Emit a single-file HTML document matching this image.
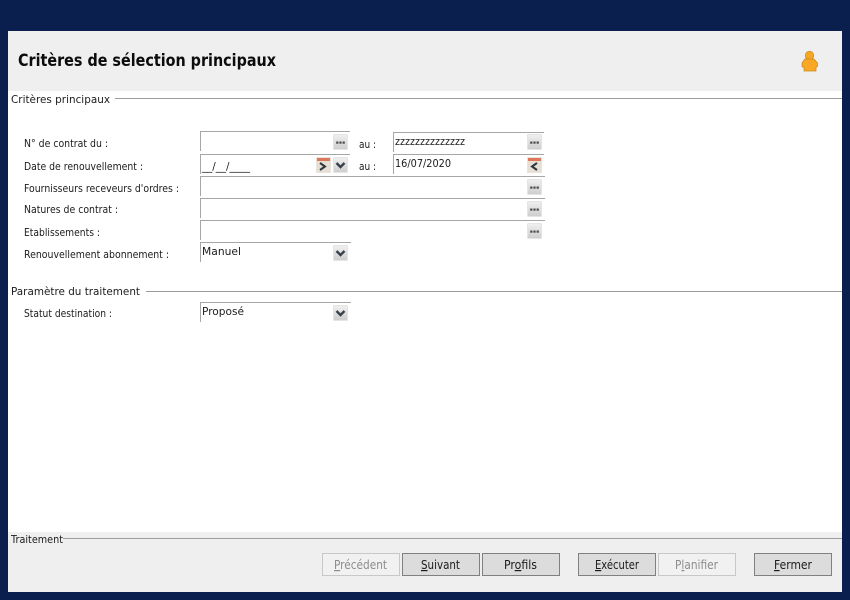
<!DOCTYPE html>
<html lang="fr">
<head>
<meta charset="utf-8">
<title>Critères de sélection principaux</title>
<style>
html,body{margin:0;padding:0;width:850px;height:600px;overflow:hidden;background:#0a1f4d}
svg{display:block}
text{font-family:"DejaVu Sans","Liberation Sans",sans-serif;font-size:11px;fill:#1c1c1c}
</style>
</head>
<body>
<svg width="850" height="600" viewBox="0 0 850 600" xmlns="http://www.w3.org/2000/svg">
<defs>
<linearGradient id="b" x1="0" y1="0" x2="0" y2="1"><stop offset="0" stop-color="#f0f0f0"/><stop offset="1" stop-color="#cdcdcd"/></linearGradient>
<g id="dots"><rect x="0.5" y="0.5" width="14" height="15" rx="1" fill="url(#b)" stroke="#e4e4e4"/><rect x="3.2" y="7.5" width="2.2" height="2.2" fill="#4a4a4a"/><rect x="6.4" y="7.5" width="2.2" height="2.2" fill="#4a4a4a"/><rect x="9.6" y="7.5" width="2.2" height="2.2" fill="#4a4a4a"/></g>
<g id="chev"><rect x="0.5" y="0.5" width="14" height="15" rx="1" fill="url(#b)" stroke="#e4e4e4"/><path d="M3.5 6L7.5 10L11.5 6" fill="none" stroke="#39424c" stroke-width="2.4"/></g>
<g id="cal"><rect x="0.5" y="0.5" width="14" height="15" fill="#e6dfd4" stroke="#e8e4dc"/><rect x="1" y="1" width="13" height="3" fill="#e0765a"/></g>
</defs>

<rect width="850" height="600" fill="#0a1f4d"/>
<rect x="8" y="31" width="834" height="561" fill="#fff"/>
<rect x="8" y="31" width="834" height="60" fill="#efefef"/>
<rect x="8" y="532" width="834" height="60" fill="#efefef"/>

<text x="18" y="66" textLength="258" lengthAdjust="spacingAndGlyphs" style="font-size:16.5px;font-weight:bold;fill:#0c0c0c">Critères de sélection principaux</text>

<g transform="translate(801,51)">
<circle cx="8.5" cy="4.5" r="4.3" fill="#f5a623" stroke="#c9861c" stroke-width=".6"/>
<path d="M4 8H13L16.5 12V15.5L15 16.5V20H3V16.5L1 15.5V12Z" fill="#f9a825" stroke="#c9861c" stroke-width=".7"/>
</g>

<text x="11" y="103" textLength="99" lengthAdjust="spacingAndGlyphs">Critères principaux</text>
<rect x="115" y="98" width="727" height="1" fill="#9c9c9c"/>
<text x="11" y="295" textLength="129" lengthAdjust="spacingAndGlyphs">Paramètre du traitement</text>
<rect x="146" y="291" width="696" height="1" fill="#9c9c9c"/>
<text x="11" y="543" textLength="52" lengthAdjust="spacingAndGlyphs">Traitement</text>
<rect x="63" y="538" width="779" height="1" fill="#9c9c9c"/>

<text x="24" y="147" textLength="84" lengthAdjust="spacingAndGlyphs">N° de contrat du :</text>
<text x="24" y="170" textLength="119" lengthAdjust="spacingAndGlyphs">Date de renouvellement :</text>
<text x="24" y="192" textLength="155" lengthAdjust="spacingAndGlyphs">Fournisseurs receveurs d'ordres :</text>
<text x="24" y="213" textLength="94" lengthAdjust="spacingAndGlyphs">Natures de contrat :</text>
<text x="24" y="236" textLength="76" lengthAdjust="spacingAndGlyphs">Etablissements :</text>
<text x="24" y="258" textLength="145" lengthAdjust="spacingAndGlyphs">Renouvellement abonnement :</text>
<text x="24" y="317" textLength="88" lengthAdjust="spacingAndGlyphs">Statut destination :</text>
<text x="359" y="148" textLength="17" lengthAdjust="spacingAndGlyphs">au :</text>
<text x="359" y="170" textLength="17" lengthAdjust="spacingAndGlyphs">au :</text>

<g fill="#a6a6a6">
<rect x="200" y="131" width="150" height="1"/><rect x="200" y="131" width="1" height="20"/>
<rect x="200" y="154" width="150" height="1"/><rect x="200" y="154" width="1" height="20"/>
<rect x="200" y="176" width="345" height="1"/><rect x="200" y="176" width="1" height="20"/>
<rect x="200" y="198" width="345" height="1"/><rect x="200" y="198" width="1" height="20"/>
<rect x="200" y="220" width="345" height="1"/><rect x="200" y="220" width="1" height="20"/>
<rect x="200" y="242" width="151" height="1"/><rect x="200" y="242" width="1" height="20"/>
<rect x="200" y="302" width="151" height="1"/><rect x="200" y="302" width="1" height="20"/>
<rect x="393" y="132" width="151" height="1"/><rect x="393" y="132" width="1" height="20"/>
<rect x="393" y="154" width="151" height="1"/><rect x="393" y="154" width="1" height="20"/>
</g>

<text x="202" y="170" textLength="48" lengthAdjust="spacingAndGlyphs">__/__/____</text>
<text x="395" y="145" textLength="70" lengthAdjust="spacingAndGlyphs">zzzzzzzzzzzzzz</text>
<text x="395" y="167" textLength="56" lengthAdjust="spacingAndGlyphs">16/07/2020</text>
<text x="202" y="255" textLength="39" lengthAdjust="spacingAndGlyphs">Manuel</text>
<text x="202" y="315" textLength="42" lengthAdjust="spacingAndGlyphs">Proposé</text>

<use href="#dots" x="333" y="134"/>
<use href="#dots" x="527" y="134"/>
<use href="#dots" x="527" y="179"/>
<use href="#dots" x="527" y="201"/>
<use href="#dots" x="527" y="223"/>
<use href="#chev" x="333" y="157"/>
<use href="#chev" x="333" y="245"/>
<use href="#chev" x="333" y="305"/>
<use href="#cal" x="316" y="157"/>
<path d="M320 163L325 166.5L320 170" fill="none" stroke="#2e3640" stroke-width="2"/>
<use href="#cal" x="527" y="157"/>
<path d="M537 163L532 166.5L537 170" fill="none" stroke="#2e3640" stroke-width="2"/>

<g stroke="#c8c8c8" fill="#f1f1f1">
<rect x="322.5" y="553.5" width="77" height="22"/>
<rect x="658.5" y="553.5" width="77" height="22"/>
</g>
<g stroke="#808080" fill="#dcdcdc">
<rect x="402.5" y="553.5" width="77" height="22"/>
<rect x="482.5" y="553.5" width="77" height="22"/>
<rect x="578.5" y="553.5" width="77" height="22"/>
<rect x="754.5" y="553.5" width="77" height="22"/>
</g>

<text x="334" y="569" textLength="53" lengthAdjust="spacingAndGlyphs" style="fill:#8c8c8c;font-size:12px"><tspan text-decoration="underline">P</tspan>récédent</text>
<text x="421" y="569" textLength="39" lengthAdjust="spacingAndGlyphs" style="font-size:12px"><tspan text-decoration="underline">S</tspan>uivant</text>
<text x="504" y="569" textLength="33" lengthAdjust="spacingAndGlyphs" style="font-size:12px">Pr<tspan text-decoration="underline">o</tspan>fils</text>
<text x="595" y="569" textLength="44" lengthAdjust="spacingAndGlyphs" style="font-size:12px"><tspan text-decoration="underline">E</tspan>xécuter</text>
<text x="675" y="569" textLength="43" lengthAdjust="spacingAndGlyphs" style="fill:#8c8c8c;font-size:12px">P<tspan text-decoration="underline">l</tspan>anifier</text>
<text x="774" y="569" textLength="38" lengthAdjust="spacingAndGlyphs" style="font-size:12px"><tspan text-decoration="underline">F</tspan>ermer</text>
</svg>
</body>
</html>
